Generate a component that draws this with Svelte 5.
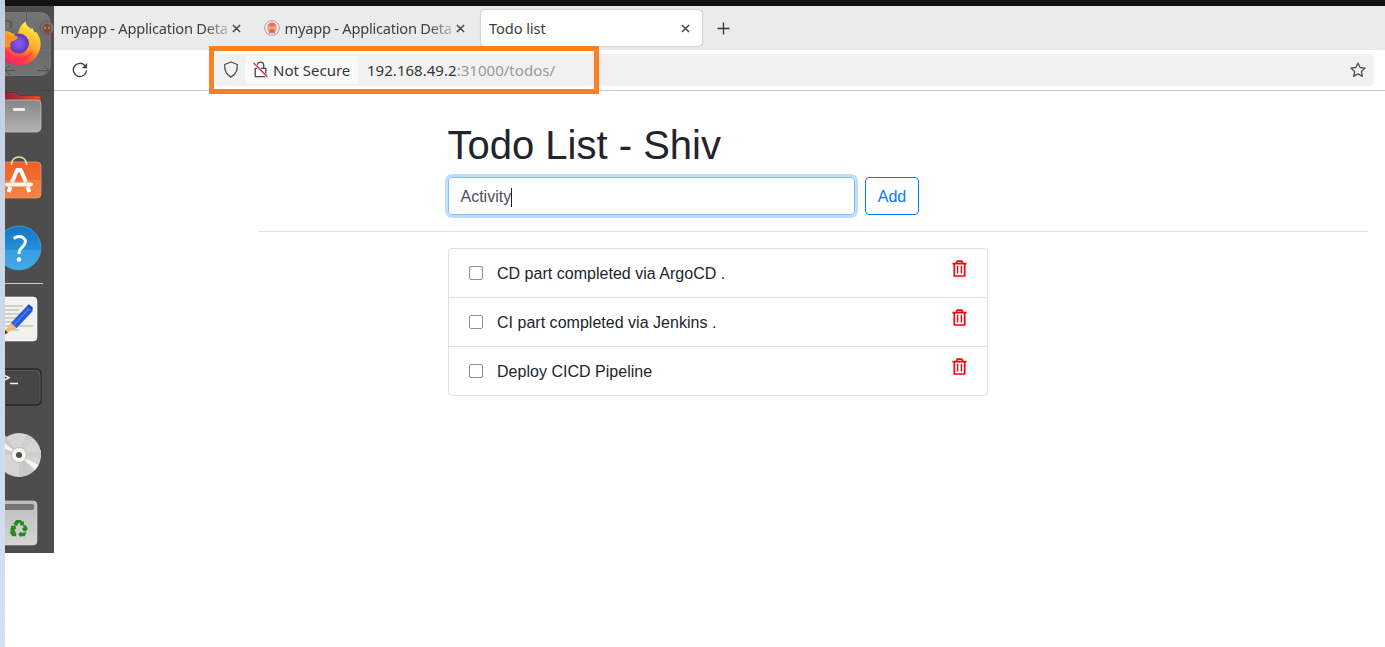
<script>
  const todos = ['CD part completed via ArgoCD .', 'CI part completed via Jenkins .', 'Deploy CICD Pipeline'];
  let activity = $state('Activity');
</script>

{#snippet close()}
  <svg class="close" width="9" height="9" viewBox="0 0 9 9"><path d="M.9.9l7.2 7.2M8.1.9L.9 8.1" stroke="#3d3d3d" stroke-width="1.35" /></svg>
{/snippet}

<div class="screen">
  <div class="desktop-edge"></div>
  <div class="browser">
    <div class="system-bar"></div>
    <div class="tabs">
      <div class="tab first"><span class="title">myapp - Application Deta</span>{@render close()}</div>
      <div class="tab second">
        <svg class="favicon" width="16" height="16" viewBox="0 0 16 16">
          <circle cx="8" cy="8" r="7.3" fill="#f3edf0" stroke="#9b8fd0" stroke-width=".9" />
          <path d="M3.6 7a4.4 4.6 0 018.8 0v2.6l-1.2 1.5v2.5H9.8l-.6-1-.6 1H7.4l-.6-1-.6 1H4.8v-2.5L3.6 9.6z" fill="#f17445" />
          <circle cx="5.9" cy="7.8" r="1.5" fill="#fbd8cb" /><circle cx="10.1" cy="7.8" r="1.5" fill="#fbd8cb" />
          <circle cx="6" cy="7.8" r=".55" fill="#46333c" /><circle cx="10" cy="7.8" r=".55" fill="#46333c" />
          <path d="M6.7 11q1.3-.9 2.6 0" stroke="#913f31" fill="none" stroke-width=".8" />
        </svg>
        <span class="title">myapp - Application Deta</span>{@render close()}
      </div>
      <div class="tab active"><span class="name">Todo list</span>{@render close()}</div>
      <svg class="plus" width="13" height="13" viewBox="0 0 13 13"><path d="M6.5.5v12M.5 6.5h12" stroke="#353535" stroke-width="1.3" /></svg>
    </div>
    <div class="toolbar">
      <svg class="reload" width="16" height="16" viewBox="0 0 16 16">
        <path d="M13.1 3.8A6.6 6.6 0 1 0 14.5 8.5" fill="none" stroke="#414141" stroke-width="1.35" />
        <path d="M15.1 1v5.3H9.8z" fill="#414141" />
      </svg>
      <div class="address">
        <svg class="shield" width="16" height="17" viewBox="0 0 16 17"><path d="M8 1l6.3 2.5c.4 5.6-1.6 10.1-6.3 12.6C3.3 13.6 1.3 9.1 1.7 3.5z" fill="none" stroke="#4c4c4c" stroke-width="1.25" stroke-linejoin="round" /></svg>
        <div class="security">
          <svg width="15" height="17" viewBox="0 0 15 17">
            <path d="M4.3 7V4.3a3.2 3.2 0 016.4 0V7M2.2 7.4h10.6v8.2H2.2z" fill="none" stroke="#4b4b4b" stroke-width="1.35" stroke-linejoin="round" />
            <path d="M.8 2.2l13.4 13.6" stroke="#fafafa" stroke-width="2.6" /><path d="M.7 2l13.6 13.8" stroke="#e52455" stroke-width="1.35" />
          </svg>
          <span>Not Secure</span>
        </div>
        <div class="url">192.168.49.2<span>:31000/todos/</span></div>
        <svg class="star" width="16" height="16" viewBox="0 0 16 16"><path d="M8 1l2.1 4.5 5 .6-3.7 3.4 1 4.9L8 11.9l-4.4 2.5 1-4.9L.9 6.1l5-.6z" fill="none" stroke="#505050" stroke-width="1.3" stroke-linejoin="round" /></svg>
      </div>
    </div>
    <main>
      <h1>Todo List - Shiv</h1>
      <form onsubmit={(e) => e.preventDefault()}>
        <div class="field">{activity}<i></i></div>
        <button>Add</button>
      </form>
      <hr />
      <ul>
        {#each todos as todo}
          <li>
            <input type="checkbox" aria-label={todo} /><span>{todo}</span>
            <svg width="15" height="17" viewBox="0 0 15 17" fill="none" stroke="#ff0008" stroke-width="1.7">
              <path d="M.4 3.7h14.2M4.2 3.5l1-2.3h4.6l1 2.3M2.3 4v12h10.4V4" stroke-linejoin="round" /><path d="M5.6 5.8v7.7M9.4 5.8v7.7" stroke-width="1.4" />
            </svg>
          </li>
        {/each}
      </ul>
    </main>
  </div>

  <div class="dock">
    <svg width="49" height="80" viewBox="5 6 49 80">
      <defs>
        <linearGradient id="flame" x1=".8" y1="0" x2=".3" y2="1"><stop stop-color="#fff44f" /><stop offset=".42" stop-color="#ffb52b" /><stop offset=".7" stop-color="#ff5a35" /><stop offset="1" stop-color="#f01c68" /></linearGradient>
        <radialGradient id="globe"><stop stop-color="#9059ff" /><stop offset=".6" stop-color="#7548d2" /><stop offset="1" stop-color="#583ab0" /></radialGradient>
        <linearGradient id="tile" x1="0" y1="0" x2="0" y2="1"><stop stop-color="#757575" /><stop offset=".55" stop-color="#696969" /><stop offset="1" stop-color="#747474" /></linearGradient>
      </defs>
      <path d="M-5 12h44q12 0 12 12v40q0 12-12 12H-5z" fill="url(#tile)" />
      <path d="M26.5 6v15" stroke="#5c5c5c" /><path d="M5 50.5h46" stroke="#747474" />
      <path d="M5 21h4q2 0 2 2v5" stroke="#4a4a4a" fill="none" stroke-width="1.2" />
      <circle cx="47" cy="28" r="7" fill="#79706e" stroke="#5d5773" /><path d="M43 30v-4q4-5 8 0v4l-2 4h-4z" fill="#864936" /><path d="M44 28h2m2 0h2" stroke="#b39c94" stroke-width="1.4" />
      <path d="M5 70.5h10M37 70.5h12m-5-5l5 5-5 5M10 65l-5 5 5 5" fill="none" stroke="#505050" />
      <path d="M19.5 29c1-3.5 3.7-6 6.200-7.500-.2 3.300 2.300 5.300 5.400 7.500l.8-1.500c1.300 2 2 3.200 2.600 5l1.500-.7c5.300 6.400 5.800 14 2.800 20.500C35.400 60.800 27 65.700 18.500 65.300 7 65-3 57-3 44c0-7 2-12 5-15l3 2c6 0 6.500 4 12.500 3z" fill="url(#flame)" />
      <circle cx="19" cy="43.500" r="10" fill="url(#globe)" />
      <path d="M5 31q4 4 5 5 4-2 8 1-2 4-6 4-3 3-1 6-5-1-6 4z" fill="#ff9420" />
      <path d="M5 46q4 11 13 11 10 0 15-7-3 11-15 12Q9 62 5 56z" fill="#fd3154" opacity=".75" />
    </svg>
    <svg width="49" height="60" viewBox="5 86 49 60">
      <defs><linearGradient id="folder" x2="1"><stop stop-color="#8d1540" /><stop offset="1" stop-color="#e54b1b" /></linearGradient><linearGradient id="drawer" x1="0" y1="0" x2="0" y2="1"><stop stop-color="#868686" /><stop offset="1" stop-color="#b2b2b2" /></linearGradient></defs>
      <path d="M5 90.500h49" stroke="#454545" />
      <path d="M-2 92.500h17l4 3h19q3 0 3 3v10H-2z" fill="url(#folder)" stroke="#333" stroke-width=".5" />
      <path d="M-2 100h39q4 0 4 4v23q0 5-5 5H-2z" fill="url(#drawer)" stroke="#c5c5c5" stroke-width=".7" />
      <rect x="13" y="108" width="12" height="3" rx="1" fill="#eee" />
    </svg>
    <svg width="49" height="70" viewBox="5 146 49 70">
      <defs><linearGradient id="bag" x1="0" y1="0" x2="0" y2="1"><stop stop-color="#f06128" /><stop offset="1" stop-color="#f37739" /></linearGradient></defs>
      <path d="M-2 162h39q4 0 4 4v28q0 4-4 4H-2z" fill="url(#bag)" stroke="#f69a6b" stroke-width=".7" /><path d="M5 180h36v13q0 5-5 5H5z" fill="#f68b50" opacity=".5" />
      <path d="M11.500 165v-1q1-7 7.500-7t7.500 7v1" fill="none" stroke="#f5d9a2" stroke-width="1.7" />
      <path d="M12 182L17.300 170h3.400L26 182M10.500 187l-2 5M27.500 187l2 5" fill="none" stroke="#fff" stroke-width="4" /><path d="M7 184.500h24" stroke="#fff5ea" stroke-width="4" stroke-linecap="round" />
    </svg>
    <svg width="49" height="78" viewBox="5 216 49 78">
      <defs><linearGradient id="help" x1="0" y1="0" x2="0" y2="1"><stop stop-color="#1676c6" /><stop offset=".53" stop-color="#258fdc" /><stop offset=".55" stop-color="#389de2" /><stop offset="1" stop-color="#43aae8" /></linearGradient></defs>
      <circle cx="19" cy="248" r="22" fill="url(#help)" stroke="#48a7df" stroke-width=".7" />
      <path d="M13.700 238.500q5-3.500 9.300-.9c4 3 2.500 6.500-.7 9.400-2.500 2.200-3.300 3.500-3.300 7" fill="none" stroke="#fff" stroke-width="3" /><circle cx="19" cy="259.500" r="2.300" fill="#fff" />
      <path d="M5 283.500h38" stroke="#d0d0c9" />
    </svg>
    <svg width="49" height="60" viewBox="5 294 49 60">
      <path d="M-2 297h35q4 0 4 4v36q0 4-4 4H-2z" fill="#f1f1ef" stroke="#fff" stroke-width=".6" /><path d="M5 306h18M5 310h14M5 314h23M5 318h15M5 322h12M5 326h28M5 330h14" stroke="#c5c3b6" stroke-width="1.4" />
      <path d="M11 323l15.500-16.500 6 4.800-16 17z" fill="#285ad6" /><path d="M13.500 325.500L29 309" stroke="#4e84ef" stroke-width="1.300" /><path d="M11 323l5.500 5.300L5 333.500v-3z" fill="#f1bc76" /><path d="M5 330l3 2.500-3 2z" fill="#424242" /><path d="M26.500 306.500l2.200-2.300 4 3-.2 4z" fill="#174dca" />
    </svg>
    <svg width="49" height="66" viewBox="5 354 49 66">
      <path d="M-2 369h38q5 0 5 5v26q0 5-5 5H-2z" fill="#464646" stroke="#292929" stroke-width="1.500" /><path d="M5 370.500h31q4 0 4 4v26" fill="none" stroke="#686868" stroke-width=".6" /><path d="M4 375l5 2.700-5 2.800M10 383.500h8" fill="none" stroke="#f1f1f1" stroke-width="1.600" />
    </svg>
    <svg width="49" height="70" viewBox="5 420 49 70">
      <circle cx="19" cy="455" r="22" fill="#d5d5d5" /><path d="M19 455L5 435l-4 5v14zM19 455v22l9-2 8-7z" fill="#c9c9c9" /><path d="M19 455L1 440v7zM19 455l19.500 10-3.500 5z" fill="#f6f6f6" />
      <path d="M19 455l7-21 8 5zM19 455l22-5v8z" fill="#cecece" /><circle cx="19" cy="455" r="7.500" fill="#f5f5f2" stroke="#b8b3a4" stroke-width=".8" /><circle cx="19" cy="455" r="3" fill="#4d4d4d" />
    </svg>
    <svg width="49" height="63" viewBox="5 490 49 63">
      <defs><linearGradient id="bin" x1="0" y1="0" x2="0" y2="1"><stop stop-color="#bcbcbc" /><stop offset="1" stop-color="#d5d5d5" /></linearGradient></defs>
      <path d="M-2 501h35q4 0 4 4v36q0 4-4 4H-2z" fill="url(#bin)" stroke="#ddd" stroke-width=".6" /><path d="M-2 504h34q2 0 2 2v2q0 2-2 2H-2z" fill="#757575" />
      <g fill="#268b1e" transform="translate(1 26) scale(.95)"><path d="M13 524l3-4h5l2 2 1-1 .5 5-5-.5 1-1-1.500-2-2.500 4z" /><path d="M23 527l3-2 2 4q0 3-4 3l-2-3 2-1z" /><path d="M27 533l-2 4h-4v1.500l-3-3.500 3-3v1.500z" /><path d="M16 533v4h-4l-3-4 2-1.500-1.500-1 4.500-1 1.500 4-1.500-.7.500 1z" /><path d="M9.500 530l1.500-3-1-.8 5-.7 1.200 4.600-1.400-.8-1.300 2z" /></g>
    </svg>
  </div>
  <div class="highlight"></div>
</div>

<style>
  :global(body) { margin: 0; background: #fff; }
  * { box-sizing: border-box; }
  svg { display: block; flex: none; }
  .screen { position: relative; display: flex; width: 1385px; height: 647px; overflow: hidden; background: #fff; }
  .desktop-edge { width: 5px; background: linear-gradient(#c4cee3, #ccd7e9 48%, #d5e0f1); }
  .browser { flex: 1; min-width: 0; font-family: "Noto Sans", sans-serif; }
  .system-bar { height: 6px; background: #131112; }
  .tabs { display: flex; align-items: center; height: 44px; padding-left: 55.500px; background: #ebebeb; font-size: 14.67px; color: #3d3d3d; }
  .tab { display: flex; align-items: center; height: 36px; white-space: nowrap; }
  .tab .title { width: 167px; letter-spacing: -.25px; mask-image: linear-gradient(90deg, #000 143px, transparent 175px); }
  .first { width: 204px; }
  .first .close, .second .close { margin-left: 4px; }
  .second { width: 216px; }
  .favicon { margin-right: 5px; margin-left: -1px; }
  .active { width: 221.500px; padding: 0 12px 0 8.500px; justify-content: space-between; background: #fff; border-radius: 4px; box-shadow: 0 0 2px #999; }
  .name { letter-spacing: -.1px; }
  .plus { margin-left: 15px; }
  .toolbar { display: flex; align-items: center; height: 41px; padding: 0 11px 1px 67px; border-bottom: 1px solid #c5c5c5; }
  .reload { margin-right: 127px; }
  .address { display: flex; align-items: center; flex: 1; height: 32px; padding-left: 8px; border-radius: 4px; background: #f1f1f1; font-size: 15px; color: #373737; }
  .security { display: flex; align-items: center; gap: 5px; width: 113px; height: 28px; margin-left: 6px; padding-left: 8px; border-radius: 4px; background: #fafafa; white-space: nowrap; }
  .url { margin-left: 9px; white-space: nowrap; letter-spacing: .03px; }
  .url span { color: #999; }
  .star { margin: 0 8px 0 auto; }
  main { width: 1110px; margin-left: 253px; padding-top: 30px; font: 16px/24px "Liberation Sans", Arial, sans-serif; color: #212529; }
  h1 { margin: 0 0 8px 189.500px; font-size: 40px; line-height: 48px; font-weight: 400; }
  form { display: flex; gap: 10px; margin-left: 190px; }
  .field { display: flex; align-items: center; width: 407px; height: 38px; padding: 2px 11.500px 0; border: 1px solid #80bdff; border-radius: 4px; box-shadow: 0 0 0 3px #bfdeff; color: #495057; }
  .field i { width: 1px; height: 19px; margin-left: -.5px; background: #222; }
  button { width: 54px; height: 38px; padding: 2px 0 0; border: 1px solid #007bff; border-radius: 4px; background: #fff; color: #007bff; font: inherit; }
  hr { margin: 16px 0; border: 0; border-top: 1px solid #e2e2e2; }
  ul { width: 540px; margin: 0 0 0 190px; padding: 0; border: 1px solid #dfdfdf; border-radius: 4px; list-style: none; }
  li { display: flex; align-items: center; height: 49px; padding: 0 20px; border-bottom: 1px solid #dfdfdf; }
  li:last-child { height: 48px; border: 0; }
  li input { appearance: none; width: 14px; height: 14px; margin: 0 14px 0 0; border: 1px solid #8f8f9d; border-radius: 2px; background: #fff; }
  li span { padding-top: 2px; letter-spacing: .02px; }
  li svg { margin: 0 0 9px auto; }
  .dock { position: absolute; left: 5px; top: 6px; width: 49px; height: 547px; overflow: hidden; background: #4d4d4d; }
  .highlight { position: absolute; left: 209px; top: 46px; width: 390px; height: 48px; border: 5px solid #ff8023; }
</style>
